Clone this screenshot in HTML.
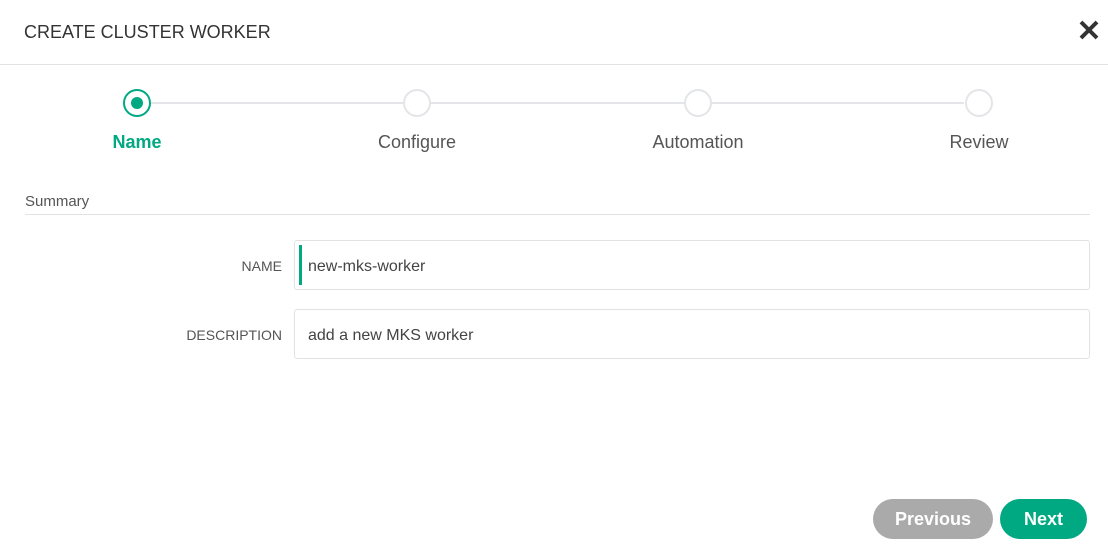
<!DOCTYPE html>
<html><head><style>
*{margin:0;padding:0;box-sizing:border-box}
body{width:1108px;height:550px;background:#fff;font-family:"Liberation Sans",sans-serif;position:relative;overflow:hidden;color:#444}
.abs{position:absolute}
.title{left:24px;top:22px;font-size:18px;color:#333}
.hr1{left:0;top:64px;width:1108px;height:1px;background:#e2e2e2}
.line{top:102px;height:2px;background:#e3e5e8}
.dot{width:28px;height:28px;border-radius:50%;border:2px solid #e3e5e8;background:#fff;top:89px}
.lbl{top:132px;font-size:18px;color:#555;width:200px;text-align:center}
.sum{left:25px;top:193px;font-size:15px;color:#555}
.hr2{left:25px;top:214px;width:1065px;height:1px;background:#e2e2e2}
.flbl{font-size:14px;color:#555;text-align:right;width:200px;left:82px}
.inp{left:294px;width:796px;height:50px;border:1px solid #e2e2e2;border-radius:3px;font-size:16px;color:#444;padding:17px 0 0 13px}
.btn{top:499px;height:40px;border-radius:20px;color:#fff;font-weight:bold;font-size:18px;text-align:center;line-height:40px}
</style></head><body>
<div class="abs title">CREATE CLUSTER WORKER</div>
<svg class="abs" style="left:1078px;top:19px" width="22" height="22" viewBox="0 0 22 22"><path d="M3 3L19 19M19 3L3 19" stroke="#333" stroke-width="4"/></svg>
<div class="abs hr1"></div>
<div class="abs line" style="left:150px;width:814px"></div>
<div class="abs dot" style="left:123px;border-color:#01a982;border-width:2px"><div style="position:absolute;left:6px;top:6px;width:12px;height:12px;border-radius:50%;background:#01a982"></div></div>
<div class="abs dot" style="left:403px"></div>
<div class="abs dot" style="left:684px"></div>
<div class="abs dot" style="left:965px"></div>
<div class="abs lbl" style="left:37px;color:#01a982;font-weight:bold">Name</div>
<div class="abs lbl" style="left:317px">Configure</div>
<div class="abs lbl" style="left:598px">Automation</div>
<div class="abs lbl" style="left:879px">Review</div>
<div class="abs sum">Summary</div>
<div class="abs hr2"></div>
<div class="abs flbl" style="top:258px">NAME</div>
<div class="abs inp" style="top:240px">new-mks-worker<div style="position:absolute;left:4px;top:4px;width:3px;height:40px;background:#01a982"></div></div>
<div class="abs flbl" style="top:327px">DESCRIPTION</div>
<div class="abs inp" style="top:309px">add a new MKS worker</div>
<div class="abs btn" style="left:873px;width:120px;background:#aaa">Previous</div>
<div class="abs btn" style="left:1000px;width:87px;background:#01a982">Next</div>
</body></html>
